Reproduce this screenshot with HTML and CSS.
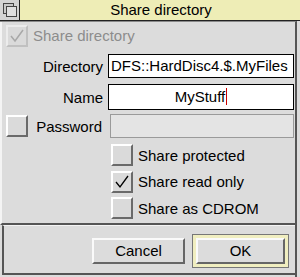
FILE: index.html
```html
<!DOCTYPE html>
<html>
<head>
<meta charset="utf-8">
<link rel="stylesheet" href="styles.css">
</head>
<body>
<div class="win">
  <div class="titlebar">
    <div class="back">
      <svg width="20" height="20" viewBox="0 0 20 20">
        <rect x="3.5" y="3.5" width="10" height="10" fill="#c8c8c8" stroke="#444" stroke-width="1"/>
        <rect x="6.5" y="6.5" width="10" height="10" fill="#e0e0e0" stroke="#444" stroke-width="1"/>
      </svg>
    </div>
    <div class="title">Share directory</div>
  </div>
  <div class="body">
    <div class="main">
      <div class="row first">
        <span class="opt disabled"><svg viewBox="0 0 18 18" width="18" height="18"><path d="M3 9 L7 14 L15 3" fill="none" stroke="#a8a8a8" stroke-width="1.5"/></svg></span>
        <span class="optlabel grey">Share directory</span>
      </div>
      <div class="row field-row dir">
        <span class="label">Directory</span>
        <span class="field">DFS::HardDisc4.$.MyFiles</span>
      </div>
      <div class="row field-row name">
        <span class="label">Name</span>
        <span class="field center">MyStuff<span class="caret"></span></span>
      </div>
      <div class="row field-row pw">
        <span class="opt"></span>
        <span class="label pwlabel">Password</span>
        <span class="field disabled-field"></span>
      </div>
      <div class="opts">
        <div class="optrow"><span class="opt"></span><span class="optlabel">Share protected</span></div>
        <div class="optrow"><span class="opt"><svg viewBox="0 0 18 18" width="18" height="18"><path d="M3 9 L7 14 L15 3" fill="none" stroke="#000" stroke-width="1.3"/></svg></span><span class="optlabel">Share read only</span></div>
        <div class="optrow"><span class="opt"></span><span class="optlabel">Share as CDROM</span></div>
      </div>
    </div>
    <div class="actions">
      <div class="btn cancel">Cancel</div>
      <div class="default"><div class="btn ok">OK</div></div>
    </div>
  </div>
</div>
</body>
</html>
```
FILE: styles.css
```css
* { box-sizing: border-box; }
html, body { margin: 0; padding: 0; }
body {
  width: 300px;
  height: 277px;
  background: #dcdcdc;
  font-family: "Liberation Sans", Arial, sans-serif;
  font-size: 15px;
  color: #000;
  overflow: hidden;
}
.win { width: 300px; height: 277px; display: flex; flex-direction: column; }
.titlebar {
  height: 21px;
  display: flex;
  border-bottom: 1px solid #222;
}
.back {
  width: 20px;
  height: 20px;
  background: #d4d4d4;
  border-right: 1px solid #222;
}
.back svg { display: block; }
.title {
  flex: 1;
  background: #eeedb6;
  text-align: center;
  line-height: 20px;
  font-size: 15px;
  padding-left: 2px;
}
.body {
  flex: 1;
  display: flex;
  flex-direction: column;
  border-right: 2px solid #555;
  margin-right: 3px;
  border-top: 1px solid #8a8a8a;
}
.main {
  height: 203px;
  border-left: 2px solid #f4f4f4;
  border-bottom: 2px solid #555;
  padding-top: 2px;
}
.row { display: flex; align-items: center; }
.first { height: 23px; padding-left: 4px; }
.opt {
  width: 22px;
  height: 22px;
  flex: none;
  background: #dadada;
  border-top: 2px solid #fff;
  border-left: 2px solid #fff;
  border-right: 2px solid #6a6a6a;
  border-bottom: 2px solid #6a6a6a;
  display: flex;
  align-items: center;
  justify-content: center;
}
.opt.disabled {
  border-top-color: #ececec;
  border-left-color: #ececec;
  border-right-color: #c0c0c0;
  border-bottom-color: #c0c0c0;
}
.optlabel { margin-left: 5px; white-space: nowrap; }
.grey { color: #8c8c8c; }
.label { width: 106px; text-align: right; padding-right: 5px; flex: none; }
.field {
  flex: none;
  width: 186px;
  background: #fff;
  border: 1px solid #000;
  padding-left: 2px;
  white-space: nowrap;
  overflow: hidden;
}
.dir { margin-top: 7px; }
.dir .field { height: 24px; line-height: 22px; }
.name { margin-top: 6px; }
.name .field { height: 26px; line-height: 24px; }
.center { text-align: center; padding-left: 0; }
.caret {
  display: inline-block;
  width: 1px;
  height: 17px;
  background: #c00;
  vertical-align: -3px;
  margin-left: 1px;
}
.pw { margin-top: 4px; padding-left: 4px; }
.pwlabel { width: 80px; padding-right: 6px; }
.disabled-field {
  width: 184px;
  height: 24px;
  margin-left: 2px;
  background: #e4e4e4;
  border: 1px solid #9a9a9a;
}
.opts { padding-left: 109px; margin-top: 4px; }
.optrow { display: flex; align-items: center; height: 26.5px; }
.actions {
  flex: 1;
  margin-left: 2px;
  border-left: 2px solid #555;
  border-bottom: 2px solid #555;
  border-top: 1px solid #f4f4f4;
  margin-bottom: 2px;
  display: flex;
  justify-content: flex-end;
  align-items: center;
  padding-right: 6px;
  padding-top: 3px;
  gap: 7px;
}
.btn {
  height: 26px;
  background: #dcdcdc;
  border-top: 2px solid #fafafa;
  border-left: 2px solid #fafafa;
  border-right: 2px solid #666;
  border-bottom: 2px solid #666;
  text-align: center;
  line-height: 22px;
}
.cancel { width: 93px; }
.default {
  padding: 3px;
  background: #f0eec0;
  border: 1px solid #777;
}
.ok { width: 89px; }
```
